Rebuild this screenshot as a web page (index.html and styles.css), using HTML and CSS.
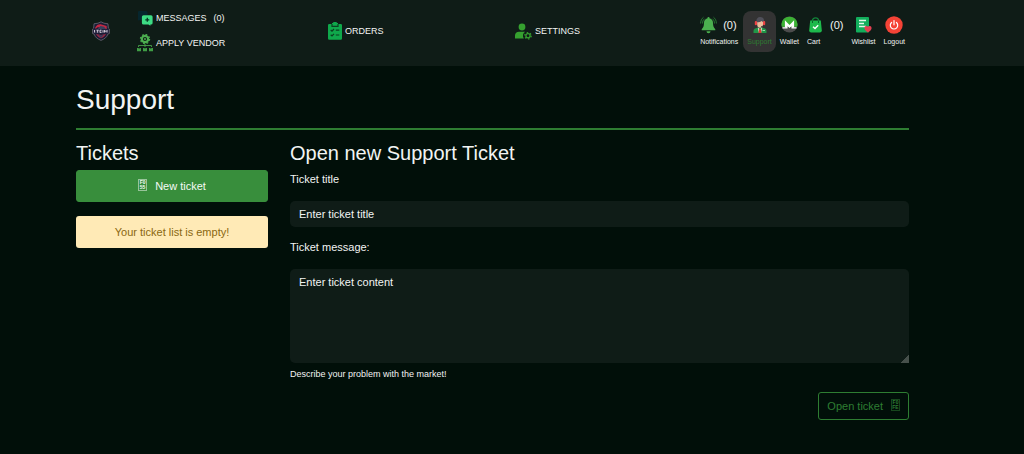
FILE: index.html
```html
<!DOCTYPE html>
<html lang="en">
<head>
<meta charset="utf-8">
<meta name="viewport" content="width=device-width, initial-scale=1">
<title>Support</title>
<link rel="stylesheet" href="styles.css">
</head>
<body>
<header class="topbar">
  <a class="logo" href="#" aria-label="Home">
    <svg width="18" height="20" viewBox="0 0 18 20">
      <path d="M9 .8 12 2.200 16 2.800 16.300 7 17.400 8v4.500l-1.600.7C15 16.200 12.500 18 9 19.400 5.500 18 3 16.200 2.200 13.200L.6 12.500V8l1.100-1L2 2.800 6 2.200z" fill="#1c1c36" stroke="#77727f" stroke-width=".7"/>
      <path d="M3.200 6.500C4.500 4 7 2.700 9.500 3.500L14.700 5v3H9L6 6 3.500 8z" fill="#c32842"/>
      <path d="M5.500 8 8.500 5l3.500.7L14 8z" fill="#39415e"/>
      <path d="M1.500 8.600h15v3.400h-15z" fill="#322d49"/>
      <path d="M2.500 9v2.500M4.500 9.200h2.200M5.600 9.200v2.500M8 9v2.600M8 9.200h1.500M8 11.400h1.500M11 9.200v2.400M12.500 9v2.500M12.500 10.200h2M15 9v2.500" stroke="#d6d3de" stroke-width=".9" fill="none"/>
      <path d="m4 13 5 1 5-1c-1 2-2.500 3.300-5 4.300C6.500 16.300 5 15 4 13z" fill="#9e2640"/>
      <path d="m6 13.500 3 .8 3-.8L9 17z" fill="#3b3c5c"/>
    </svg>
  </a>
  <nav class="menu">
    <div class="menu-stack">
      <a class="menu-link" href="#">
        <svg width="16" height="16" viewBox="0 0 16 16">
          <path d="M2 1h7a1.500 1.500 0 0 1 1.500 1.500V5H7a2 2 0 0 0-2 2v3H3.500L1 10.500V2a1 1 0 0 1 1-1z" fill="#06262e"/>
          <path d="M6.500 5.200H14a1.600 1.600 0 0 1 1.600 1.600v6.100a1.600 1.600 0 0 1-1.600 1.600h-.6v1.300l-2-1.300H6.500a1.600 1.600 0 0 1-1.600-1.600V6.800a1.600 1.600 0 0 1 1.600-1.600z" fill="#3ddc84"/>
          <path d="M10.300 7.800v4M8.300 9.800h4" stroke="#063825" stroke-width="1.300"/>
        </svg>
        <span>MESSAGES</span><span class="count-small">(0)</span>
      </a>
      <a class="menu-link" href="#">
        <svg width="16" height="18" viewBox="0 0 16 18" fill="none" stroke="#4caf50">
          <circle cx="8" cy="5" r="3.200" stroke-width="2.200"/>
          <circle cx="8" cy="5" r="4.600" stroke-width="1.200" stroke-dasharray="1.800 1.810"/>
          <circle cx="8" cy="5" r="1" fill="#4caf50" stroke="none"/>
          <path d="M8 10v3M1.500 13v-1.500h13V13" stroke-width=".8"/>
          <path d="M0 14h1.500l.6 1 .6-1H4v3.200H0zM6 14h1.500l.5 1 .5-1H10v3.200H6zM12 14h1.300l.6 1 .6-1H16v3.200h-4z" fill="#3f9d45" stroke="none"/>
        </svg>
        <span>APPLY VENDOR</span>
      </a>
    </div>
    <a class="menu-link" href="#">
      <svg width="14" height="18" viewBox="0 0 14 18">
        <path d="M1.200 2H4V1h1.200a1.800 1.800 0 0 1 3.600 0H10v1h2.800A1.200 1.200 0 0 1 14 3.200v13.300a1.200 1.200 0 0 1-1.200 1.200H1.200A1.200 1.200 0 0 1 0 16.500V3.200A1.200 1.200 0 0 1 1.200 2z" fill="#0fa84b"/>
        <path d="M4 2v2.300h6V2M2.700 8l1.300 1.200L6 7M7.800 8.200h3.500M2.700 12.800 4 14l2-2.200M7.800 13h3.500" fill="none" stroke="#0b3f21" stroke-width="1.200"/>
      </svg>
      <span>ORDERS</span>
    </a>
    <a class="menu-link" href="#">
      <svg width="17" height="17" viewBox="0 0 17 17">
        <circle cx="7" cy="4" r="3.400" fill="#35a02f"/>
        <path d="M0 15.500v-3C0 10 1.700 8.700 4 8.700h6.200a4.600 4.600 0 0 0-1.300 6.800z" fill="#35a02f"/>
        <circle cx="13" cy="12.800" r="2.100" fill="none" stroke="#35a02f" stroke-width="1.300"/>
        <circle cx="13" cy="12.800" r="3.200" fill="none" stroke="#35a02f" stroke-width="1.200" stroke-dasharray="1.500 1.850"/>
      </svg>
      <span>SETTINGS</span>
    </a>
  </nav>
  <nav class="tools" aria-label="Account">
    <a class="tool tool-notify" href="#">
      <span class="tool-icon">
        <svg width="17" height="18" viewBox="0 0 17 18">
          <path d="M8.500 1a1 1 0 0 1 1 1.200c2.300.6 3.500 2.300 3.500 4.600 0 3.400.8 5 2.300 6.400v1H1.700v-1C3.200 11.800 4 10.200 4 6.800c0-2.300 1.200-4 3.500-4.600A1 1 0 0 1 8.500 1zM6.500 15.200h4a2 2 0 0 1-4 0z" fill="#4bb04f"/>
          <path d="M2.500 7.500c0-2 .8-3.700 2.200-4.800M14.500 7.500c0-2-.8-3.700-2.200-4.800M.6 7.500C.6 4.600 1.800 2.500 3.500 1.200M16.400 7.500c0-2.900-1.200-5-2.900-6.300" fill="none" stroke="#2e8b38" stroke-width=".8"/>
        </svg>
        <span class="count">(0)</span>
      </span>
      <span class="tool-label">Notifications</span>
    </a>
    <a class="tool tool-active" href="#" aria-current="page">
      <span class="tool-icon tool-icon-center">
        <svg width="16" height="18" viewBox="0 0 16 18">
          <path d="M4.300 5.500C4.300 2.500 5.700 1 8.200 1s4 1.500 3.900 4.500L10.500 8H6z" fill="#50505a"/>
          <path d="M5.200 6.200c2 0 3.500-.3 4.600-1.200l1.200 1.200v2.300C11 10.800 9.600 12 8 12S5.200 10.800 5.200 8.500z" fill="#edbc9c"/>
          <rect x="2.800" y="5" width="2.200" height="4.200" rx="1" fill="#ef4444"/>
          <rect x="11" y="5" width="2.200" height="4.200" rx="1" fill="#ef4444"/>
          <path d="M12 9c-.3 1.200-1.500 1.600-3 1.600" fill="none" stroke="#333" stroke-width=".8"/>
          <path d="M1.500 17v-2c0-2 1.500-2.800 4-3.200h5c2.500.4 4 1.200 4 3.200v2z" fill="#219647"/>
          <path d="m5.700 11.600 2.300 2 2.300-2L9 17H7z" fill="#f1ded1"/>
          <path d="M7.300 12.700h1.400l.8 4.300H6.500z" fill="#dc3535"/>
          <path d="M10.500 14.500h2.500" stroke="#bce8c1" stroke-width=".8"/>
        </svg>
      </span>
      <span class="tool-label">Support</span>
    </a>
    <a class="tool" href="#">
      <span class="tool-icon tool-icon-center">
        <svg width="17" height="17" viewBox="0 0 17 17">
          <circle cx="8.500" cy="8.500" r="8" fill="#4c4c4c"/>
          <path d="M.8 10.800a8 8 0 1 1 15.400 0z" fill="#3bb234"/>
          <path d="M1.500 11.800h4.400V8.500l2.600 2.600 2.600-2.600v3.300h4.400" fill="none" stroke="#fff" stroke-width="1.300"/>
          <path d="M3.900 11.500V4.300l4.600 4.600 4.600-4.600v7.200h-2V9l-2.600 2.600L5.900 9v2.500z" fill="#fff"/>
        </svg>
      </span>
      <span class="tool-label">Wallet</span>
    </a>
    <a class="tool" href="#">
      <span class="tool-icon">
        <svg width="17" height="18" viewBox="0 0 17 18">
          <path d="M5.300 7V5a3.200 3.200 0 0 1 6.400 0v2" fill="none" stroke="#12853a" stroke-width="1.300"/>
          <path d="M3.200 4.500h10.600l1 9.700c.1 1.300-.7 2.200-2 2.200H4.200c-1.300 0-2.100-.9-2-2.200z" fill="#1eba4c"/>
          <path d="M5.500 4.500V7M11.500 4.500V7" stroke="#0b642d"/>
          <path d="m6 10.800 2 1.800 3.200-3.400" fill="none" stroke="#fff" stroke-width="1.400"/>
        </svg>
        <span class="count">(0)</span>
      </span>
      <span class="tool-label">Cart</span>
    </a>
    <a class="tool" href="#">
      <span class="tool-icon tool-icon-center">
        <svg width="16" height="17" viewBox="0 0 16 17">
          <rect x="0" y="1" width="13" height="15.500" rx="1" fill="#12ae5c"/>
          <path d="M3 4.500h7M3 7.500h5M3 10.500h7" stroke="#e2f8ea" stroke-width="1.300"/>
          <path d="M12 16.500C9.500 14.700 8.400 13.600 8.400 12a2 2 0 0 1 3.600-1.200A2 2 0 0 1 15.600 12c0 1.600-1.100 2.700-3.600 4.500z" fill="#e33f51"/>
        </svg>
      </span>
      <span class="tool-label">Wishlist</span>
    </a>
    <a class="tool" href="#">
      <span class="tool-icon tool-icon-center">
        <svg width="18" height="18" viewBox="0 0 18 18">
          <circle cx="9" cy="9" r="8.700" fill="#f44336"/>
          <path d="M6.600 6.500a3.700 3.700 0 1 0 4.800 0M9 4.500v4.300" fill="none" stroke="#fff" stroke-width="1.200" stroke-linecap="round"/>
        </svg>
      </span>
      <span class="tool-label">Logout</span>
    </a>
  </nav>
</header>

<main class="page">
  <h1 class="page-title">Support</h1>
  <div class="columns">
    <aside class="tickets">
      <h2 class="section-title">Tickets</h2>
      <button class="btn btn-new" type="button">
        <span class="code-glyph" aria-hidden="true"><span>F0</span><span>55</span></span>
        New ticket
      </button>
      <p class="notice">Your ticket list is empty!</p>
    </aside>
    <form class="ticket-form">
      <h2 class="section-title">Open new Support Ticket</h2>
      <label class="field-label" for="title">Ticket title</label>
      <input class="field" id="title" type="text" placeholder="Enter ticket title">
      <label class="field-label field-label-next" for="message">Ticket message:</label>
      <textarea class="field field-area" id="message" placeholder="Enter ticket content" aria-describedby="message-help"></textarea>
      <small class="help" id="message-help">Describe your problem with the market!</small>
      <button class="btn btn-open" type="submit">
        Open ticket
        <span class="code-glyph" aria-hidden="true"><span>F0</span><span>FE</span></span>
      </button>
    </form>
  </div>
</main>
</body>
</html>
```
FILE: styles.css
```css
* { box-sizing: border-box; }

body {
  margin: 0;
  background: #010f09;
  color: #f2f4f3;
  font-family: "Liberation Sans", Arial, sans-serif;
  font-size: 11px;
  line-height: 16px;
}

a { color: inherit; text-decoration: none; }
svg { display: block; flex: none; }
h1, h2, p { margin: 0; font-weight: 400; }

.topbar {
  display: flex;
  align-items: center;
  min-height: 66px;
  padding: 6px 115px 10px 92px;
  background: #0f1c17;
}

.logo { width: 45px; }

.menu {
  display: grid;
  grid-template-columns: 190fr 186fr 180fr;
  align-items: center;
  flex: 1;
  font-size: 9px;
}

.menu-stack { display: grid; gap: 8px; }
.menu-link { display: flex; align-items: center; gap: 3px; white-space: nowrap; }
.count-small { margin-left: 4px; }

.tools { display: flex; align-items: center; }
.tool { display: block; padding: 4px; }
.tool-notify { padding-right: 5px; }
.tool-active { border-radius: 8px; background: #333333; color: #2e7d32; }
.tool-icon { display: flex; align-items: center; gap: 6px; height: 20px; }
.tool-icon-center { justify-content: center; }
.tool-label { display: block; font-size: 7px; line-height: 13px; }
.count { font-size: 11px; }

.page { padding: 16px 115px 24px 76px; }

.page-title {
  padding-bottom: 10px;
  border-bottom: 2px solid #2e7d32;
  font-size: 28px;
  line-height: 36px;
}

.columns {
  display: grid;
  grid-template-columns: minmax(150px, 192fr) 619fr;
  column-gap: 22px;
  padding-top: 11px;
}

.section-title { font-size: 20px; line-height: 24px; }

.tickets { display: flex; flex-direction: column; }

.btn {
  display: flex;
  align-items: center;
  justify-content: center;
  gap: 8px;
  border: 1px solid #388e3c;
  border-radius: 3px;
  font: inherit;
  cursor: pointer;
}

.btn-new {
  margin: 5px 0 14px;
  padding: 7px 8px;
  background: #388e3c;
  color: #f5faf5;
}

.notice {
  padding: 8px;
  border-radius: 3px;
  background: #ffeab6;
  color: #8a6710;
  text-align: center;
}

.code-glyph {
  display: grid;
  width: 9px;
  margin-bottom: 3px;
  border: 1px solid;
  border-color: color-mix(in srgb, currentColor 50%, transparent);
  font-size: 5px;
  font-weight: 700;
  line-height: 5px;
  text-align: center;
}

.ticket-form { display: flex; flex-direction: column; }
.field-label { margin: 6px 0 14px; }
.field-label-next { margin-top: 12px; }

.field {
  width: 100%;
  padding: 5px 9px;
  border: 0;
  border-radius: 5px;
  background: #0f1c17;
  color: #f2f4f3;
  font: inherit;
}

.field::placeholder { color: #f2f4f3; opacity: 1; }
.field-area { min-height: 94px; border-bottom-right-radius: 0; resize: vertical; }
.field-area::-webkit-resizer { background: linear-gradient(135deg, transparent 72%, #46504b 72%); }

.help { margin-top: 3px; font-size: 9px; }

.btn-open {
  align-self: flex-end;
  margin-top: 10px;
  padding: 5px 8px;
  border-color: #2e7d32;
  background: transparent;
  color: #2e7d32;
}
```
